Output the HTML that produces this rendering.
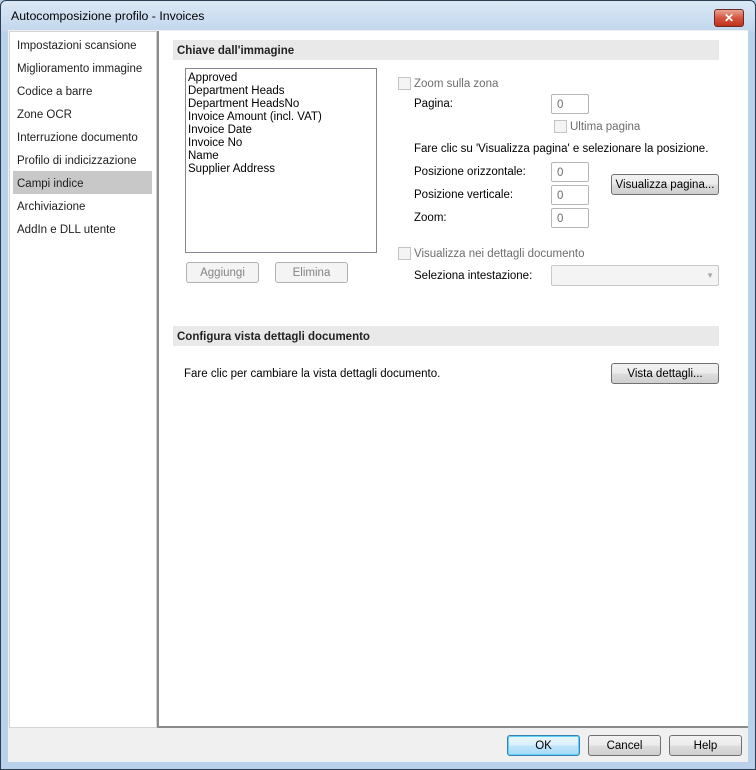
<!DOCTYPE html>
<html><head><style>
*{margin:0;padding:0;box-sizing:border-box}
body{width:756px;height:770px;font-family:"Liberation Sans",sans-serif;font-size:11.5px;color:#000;position:relative;overflow:hidden;background:#b9d1ea}
.a{position:absolute}
.win{left:0;top:0;width:756px;height:770px;border:1px solid #2b3d52;border-radius:6px 6px 0 0;background:linear-gradient(#dbe8f6,#c2d7ed 30px,#b9d1ea 31px)}
.title{left:11px;top:9px;font-size:12.3px;color:#000}
.close{left:714px;top:9px;width:30px;height:18px;border:1px solid #6b2b25;border-radius:3px;background:linear-gradient(#e8a493,#d4553f 50%,#c0311b);color:#fff;font-weight:bold;text-align:center;font-size:12px;line-height:16px}
.client{left:8px;top:30px;width:740px;height:732px;background:#f0f0f0}
.side{left:9px;top:31px;width:148px;height:697px;background:#fff;border:1px solid #d4d4d4}
.side div{position:absolute;left:7px;font-size:11.5px;color:#1e1e1e}
.sel{left:13px;top:171px;width:139px;height:23px;background:#c8c8c8}
.main{left:157px;top:31px;width:591px;height:697px;background:#fff;border-left:2px solid #8a8a8a;border-bottom:2px solid #8a8a8a}
.hdr{background:#e9e9e9;height:20px;font-weight:bold;padding:5px 0 0 4px;font-size:11.5px;color:#222}
.list{left:185px;top:68px;width:192px;height:185px;border:1px solid #828790;background:#fff;padding:3px 0 0 2px;line-height:13px}
.btn{border:1px solid #707070;border-radius:3px;background:linear-gradient(#f2f2f2,#ebebeb 50%,#dddddd 51%,#cfcfcf);text-align:center;line-height:21px;height:21px}
.dis{border-color:#adb2b5;background:#f4f4f4;color:#838383}
.cb{width:13px;height:13px;border:1px solid #c4c4c4;background:#f4f4f4}
.gr{color:#6d6d6d}
.tb{width:38px;height:20px;border:1px solid #b6b6b6;border-radius:2px;color:#6d6d6d;padding:4px 0 0 5px}
</style></head><body>
<div class="a win"></div>
<div class="a title">Autocomposizione profilo - Invoices</div>
<div class="a close">✕</div>
<div class="a client"></div>
<div class="a side">
<div style="top:8px">Impostazioni scansione</div>
<div style="top:31px">Miglioramento immagine</div>
<div style="top:54px">Codice a barre</div>
<div style="top:77px">Zone OCR</div>
<div style="top:100px">Interruzione documento</div>
<div style="top:123px">Profilo di indicizzazione</div>
</div>
<div class="a sel"></div>
<div class="a" style="left:17px;top:178px;color:#1e1e1e">Campi indice</div>
<div class="a" style="left:17px;top:201px;color:#1e1e1e">Archiviazione</div>
<div class="a" style="left:17px;top:224px;color:#1e1e1e">AddIn e DLL utente</div>
<div class="a main"></div>
<div class="a hdr" style="left:173px;top:40px;width:546px">Chiave dall'immagine</div>
<div class="a list">Approved<br>Department Heads<br>Department HeadsNo<br>Invoice Amount (incl. VAT)<br>Invoice Date<br>Invoice No<br>Name<br>Supplier Address</div>
<div class="a btn dis" style="left:186px;top:262px;width:73px">Aggiungi</div>
<div class="a btn dis" style="left:275px;top:262px;width:73px">Elimina</div>
<div class="a cb" style="left:398px;top:77px"></div>
<div class="a gr" style="left:414px;top:78px">Zoom sulla zona</div>
<div class="a" style="left:414px;top:98px">Pagina:</div>
<div class="a tb" style="left:551px;top:94px">0</div>
<div class="a cb" style="left:554px;top:120px"></div>
<div class="a gr" style="left:570px;top:121px">Ultima pagina</div>
<div class="a" style="left:414px;top:143px">Fare clic su 'Visualizza pagina' e selezionare la posizione.</div>
<div class="a" style="left:414px;top:166px">Posizione orizzontale:</div>
<div class="a tb" style="left:551px;top:162px">0</div>
<div class="a btn" style="left:611px;top:174px;width:108px">Visualizza pagina...</div>
<div class="a" style="left:414px;top:189px">Posizione verticale:</div>
<div class="a tb" style="left:551px;top:185px">0</div>
<div class="a" style="left:414px;top:212px">Zoom:</div>
<div class="a tb" style="left:551px;top:208px">0</div>
<div class="a cb" style="left:398px;top:247px"></div>
<div class="a gr" style="left:414px;top:248px">Visualizza nei dettagli documento</div>
<div class="a" style="left:414px;top:270px">Seleziona intestazione:</div>
<div class="a" style="left:551px;top:265px;width:168px;height:21px;border:1px solid #c8c8c8;border-radius:2px;background:#f4f4f4"><span style="position:absolute;right:4px;top:5px;color:#aaa;font-size:8px">▼</span></div>
<div class="a hdr" style="left:173px;top:326px;width:546px">Configura vista dettagli documento</div>
<div class="a" style="left:184px;top:368px">Fare clic per cambiare la vista dettagli documento.</div>
<div class="a btn" style="left:611px;top:363px;width:108px">Vista dettagli...</div>
<div class="a btn" style="left:507px;top:735px;width:73px;border-color:#3c7fb1;box-shadow:inset 0 0 0 1px #5fd3f5;background:linear-gradient(#eaf6fd,#d9f0fc 50%,#bee6fd 51%,#a7d9f5)">OK</div>
<div class="a btn" style="left:588px;top:735px;width:73px">Cancel</div>
<div class="a btn" style="left:669px;top:735px;width:73px">Help</div>
</body></html>
